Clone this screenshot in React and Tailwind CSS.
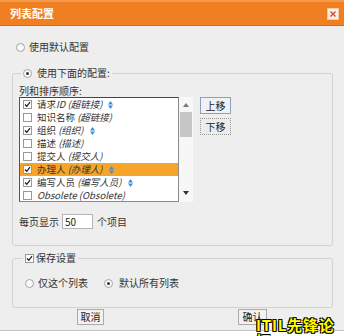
import React from "react";

const rows = [
  { name: "请求", latin: "ID", sub: "(超链接)", checked: true, sort: true },
  { name: "知识名称", sub: "(超链接)", checked: false },
  { name: "组织", sub: "(组织)", checked: true, sort: true },
  { name: "描述", sub: "(描述)", checked: false },
  { name: "提交人", sub: "(提交人)", checked: false },
  { name: "办理人", sub: "(办理人)", checked: true, sort: true, selected: true },
  { name: "编写人员", sub: "(编写人员)", checked: true, sort: true },
  { name: "", latin: "Obsolete", sub: "(Obsolete)", checked: false },
];

function Radio({ on }) {
  return (
    <span className="w-[9px] h-[9px] rounded-full border border-[#a3a3a3] bg-[#fafafa] flex items-center justify-center shrink-0">
      {on && <span className="w-[3px] h-[3px] rounded-full bg-[#333]" />}
    </span>
  );
}

function Check({ on }) {
  return (
    <span className="w-[9px] h-[9px] border border-[#999] bg-white flex items-center justify-center shrink-0">
      {on && (
        <svg width="7" height="7" viewBox="0 0 7 7">
          <path d="M1 3.5 L2.8 5.3 L6 1.2" fill="none" stroke="#222" strokeWidth="1.3" />
        </svg>
      )}
    </span>
  );
}

function SortIcon() {
  return (
    <svg width="5" height="8" viewBox="0 0 5 8" className="ml-[6px]">
      <path d="M2.5 0 L5 3.5 H0 Z" fill="#3a8fd8" />
      <path d="M2.5 8 L5 4.5 H0 Z" fill="#3a8fd8" />
    </svg>
  );
}

export default function App() {
  return (
    <div className="relative w-[344px] h-[336px] bg-white overflow-hidden font-['Noto_Sans_CJK_SC','Noto_Sans',sans-serif] text-[10px] text-[#333]">
      <div className="w-[344px] h-[331px] flex flex-col border-b border-[#c4c4c4]">
        {/* title bar */}
        <div className="h-[26px] shrink-0 bg-[#ef7f21] border-t-2 border-[#f49a4e] border-b border-b-[#d86c12] flex items-center justify-between pl-[10px] pr-[5px]">
          <span className="text-white font-bold text-[11px] leading-none">列表配置</span>
          <span className="w-[12px] h-[12px] bg-[#fbeee2] border border-[#f6c9a0] flex items-center justify-center">
            <svg width="6" height="6" viewBox="0 0 6 6">
              <path d="M0.5 0.5 L5.5 5.5 M5.5 0.5 L0.5 5.5" stroke="#d9453a" strokeWidth="1.4" />
            </svg>
          </span>
        </div>

        <div className="flex-1 bg-[#eeeeee] pl-[12px] pr-[11px] flex flex-col">
          <div className="mt-[14px] h-[14px] flex items-center gap-[4px] pl-[4px] leading-none">
            <Radio on={false} />
            <span>使用默认配置</span>
          </div>

          <fieldset className="mt-[12px] border border-[#d2d2d2] rounded-[3px] px-[6px] pt-[5px] pb-[16px]">
            <legend className="ml-[2px] px-[2px] h-[14px] flex items-center gap-[5px] leading-none">
              <Radio on={true} />
              <span>使用下面的配置:</span>
            </legend>
            <div className="h-[12px] leading-[12px]">列和排序顺序:</div>
            <div className="flex items-start">
              <div className="w-[160px] h-[105px] border border-[#8a8a8a] border-t-[#444] border-l-[#555] bg-white overflow-hidden">
                {rows.map((r, i) => (
                  <div
                    key={i}
                    className={
                      "h-[13px] flex items-center pl-[3px] leading-none whitespace-nowrap " +
                      (r.selected ? "bg-[#f6a52a]" : "")
                    }
                  >
                    <Check on={r.checked} />
                    <span className="ml-[5px] text-[9.5px]">
                      {r.name}
                      {r.latin && <i>{r.latin}</i>} <i>{r.sub}</i>
                    </span>
                    {r.sort && <SortIcon />}
                  </div>
                ))}
              </div>
              <div className="w-[14px] h-[105px] bg-[#f7f7f7] flex flex-col items-center">
                <svg width="6" height="4" viewBox="0 0 6 4" className="mt-[6px]">
                  <path d="M3 0 L6 4 H0 Z" fill="#777" />
                </svg>
                <div className="mt-[5px] w-[12px] h-[25px] bg-[#c6c6c6]" />
                <div className="flex-1" />
                <svg width="6" height="4" viewBox="0 0 6 4" className="mb-[7px]">
                  <path d="M0 0 H6 L3 4 Z" fill="#333" />
                </svg>
              </div>
              <div className="ml-[7px] flex flex-col gap-[4px]">
                <button className="w-[31px] h-[17px] border border-[#8aa1c2] bg-[#eef1f6] text-[10px] leading-none text-[#222]">
                  上移
                </button>
                <button className="w-[31px] h-[17px] border border-dotted border-[#999] bg-[#ececec] text-[10px] leading-none text-[#222]">
                  下移
                </button>
              </div>
            </div>
            <div className="mt-[12px] flex items-center leading-none">
              <span>每页显示</span>
              <span className="ml-[3px] w-[31px] h-[15px] bg-white border border-[#b5b5b5] flex items-center pl-[2px] text-[#222]">
                50
              </span>
              <span className="ml-[4px]">个项目</span>
            </div>
          </fieldset>

          <fieldset className="mt-[5px] border border-[#d2d2d2] rounded-[3px] px-[6px] pt-[11px] pb-[17px]">
            <legend className="ml-[4px] px-[2px] h-[14px] flex items-center gap-[2px] leading-none">
              <Check on={true} />
              <span>保存设置</span>
            </legend>
            <div className="h-[14px] flex items-center leading-none pl-[6px]">
              <Radio on={false} />
              <span className="ml-[4px]">仅这个列表</span>
              <span className="ml-[16px]">
                <Radio on={true} />
              </span>
              <span className="ml-[6px]">默认所有列表</span>
            </div>
          </fieldset>

          <div className="mt-[1px] flex">
            <button className="ml-[65px] w-[27px] h-[16px] border border-[#aaa] bg-[#f2f2f2] text-[10px] leading-none text-[#222]">
              取消
            </button>
            <button className="ml-[134px] w-[29px] h-[16px] border border-[#aaa] bg-[#f2f2f2] text-[10px] leading-none text-[#222]">
              确认
            </button>
          </div>
        </div>
      </div>

      <div className="absolute left-[256px] top-[317px] text-[15px] font-bold leading-[16px] text-[#ffff00] tracking-[0.8px] [text-shadow:1px_1px_0_#000,-1px_-1px_0_#000,1px_-1px_0_#000,-1px_1px_0_#000]">
        ITIL先锋论坛
      </div>
    </div>
  );
}
